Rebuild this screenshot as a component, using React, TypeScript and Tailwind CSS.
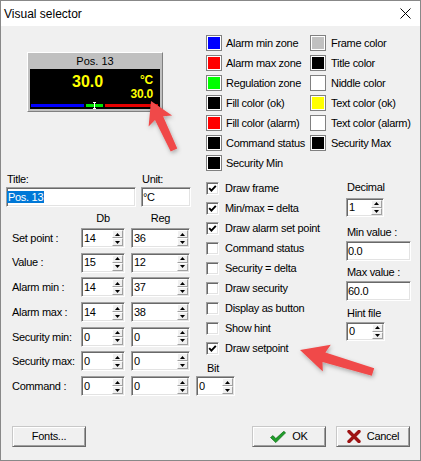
import React from 'react';

const sunken =
  'bg-white border border-t-[#a0a0a0] border-l-[#a0a0a0] border-r-white border-b-white shadow-[inset_1px_1px_0_#696969,inset_-1px_-1px_0_#e3e3e3] p-[1px]';
const raised =
  'bg-[#f0f0f0] border border-t-[#c8c8c8] border-l-[#c8c8c8] border-r-[#696969] border-b-[#696969] shadow-[inset_1px_1px_0_#fff,inset_-1px_-1px_0_#a0a0a0]';

const TriUp = () => (
  <svg width="5" height="3" viewBox="0 0 5 3">
    <path d="M0 3 L2.5 0 L5 3Z" fill="#000" />
  </svg>
);
const TriDown = () => (
  <svg width="5" height="3" viewBox="0 0 5 3">
    <path d="M0 0 L2.5 3 L5 0Z" fill="#000" />
  </svg>
);

function Spin() {
  return (
    <div className="ml-auto w-[11px] h-full flex flex-col shrink-0">
      <div className="flex-1 flex items-center justify-center bg-[#f0f0f0] border border-t-white border-l-white border-r-[#a0a0a0] border-b-[#a0a0a0]">
        <TriUp />
      </div>
      <div className="flex-1 flex items-center justify-center bg-[#f0f0f0] border border-t-white border-l-white border-r-[#a0a0a0] border-b-[#a0a0a0]">
        <TriDown />
      </div>
    </div>
  );
}

function SpinEdit({ value, w, h = 'h-[20px]' }: { value: string; w: string; h?: string }) {
  return (
    <div className={`${sunken} ${w} ${h} flex items-stretch shrink-0`}>
      <span className="flex items-center pl-[1px]">{value}</span>
      <Spin />
    </div>
  );
}

function Swatch({ color }: { color: string }) {
  return (
    <div className="w-[16px] h-[16px] border border-[#808080] p-[1px] bg-white shrink-0">
      <div className={`w-full h-full ${color}`} />
    </div>
  );
}

function CheckRow({ label, checked }: { label: string; checked?: boolean }) {
  return (
    <div className="h-[20px] flex items-center">
      <div className="w-[13px] h-[13px] bg-white border border-t-[#a0a0a0] border-l-[#a0a0a0] border-r-white border-b-white shadow-[inset_1px_1px_0_#696969,inset_-1px_-1px_0_#e3e3e3] flex items-center justify-center shrink-0">
        {checked && (
          <svg width="9" height="9" viewBox="0 0 9 9">
            <path d="M1.2 4.2 L3.4 6.6 L7.8 1.8" stroke="#000" strokeWidth="1.9" fill="none" />
          </svg>
        )}
      </div>
      <span className="ml-[6px]">{label}</span>
    </div>
  );
}

function Preview() {
  return (
    <div className="w-[136px] h-[60px] bg-[#c0c0c0] border border-t-white border-l-white border-r-[#808080] border-b-[#808080] flex flex-col">
      <div className="h-[16px] flex items-center justify-center tracking-normal">Pos. 13</div>
      <div className="mx-[2px] h-[40px] bg-black flex flex-col">
        <div className="h-[35px] flex text-[#ffff00] font-bold">
          <span className="ml-[42px] mt-[5px] text-[16px] leading-[16px] tracking-normal">30.0</span>
          <div className="ml-auto mr-[7px] mt-[5px] flex flex-col items-end gap-[1.5px] text-[12px] leading-[12px] tracking-[-0.2px]">
            <span>°C</span>
            <span>30.0</span>
          </div>
        </div>
        <div className="relative ml-[1px] w-[127px] h-[3px] flex gap-[2px]">
          <div className="w-[53px] bg-[#0000ff]" />
          <div className="w-[17px] bg-[#00e600]" />
          <div className="flex-1 bg-[#e60000]" />
          <div className="absolute left-[62px] top-[-2px] w-[3px] h-[7px] flex flex-col items-center">
            <div className="w-[3px] h-[1px] bg-white" />
            <div className="w-[1px] flex-1 bg-white" />
            <div className="w-[3px] h-[1px] bg-white" />
          </div>
        </div>
      </div>
    </div>
  );
}

const colors: [string, string][] = [
  ['bg-[#0000ff]', 'Alarm min zone'],
  ['bg-[#c0c0c0]', 'Frame color'],
  ['bg-[#ff0000]', 'Alarm max zone'],
  ['bg-black', 'Title color'],
  ['bg-[#00ff00]', 'Regulation zone'],
  ['bg-white', 'Niddle color'],
  ['bg-black', 'Fill color (ok)'],
  ['bg-[#ffff00]', 'Text color (ok)'],
  ['bg-[#ff0000]', 'Fill color (alarm)'],
  ['bg-white', 'Text color (alarm)'],
  ['bg-black', 'Command status'],
  ['bg-black', 'Security Max'],
  ['bg-black', 'Security Min'],
];

const rows = [
  ['Set point :', '14', '36'],
  ['Value :', '15', '12'],
  ['Alarm min :', '14', '37'],
  ['Alarm max :', '14', '38'],
  ['Security min:', '0', '0'],
  ['Security max:', '0', '0'],
];

const checks: [string, boolean][] = [
  ['Draw frame', true],
  ['Min/max = delta', true],
  ['Draw alarm set point', true],
  ['Command status', false],
  ['Security = delta', false],
  ['Draw security', false],
  ['Display as button', false],
  ['Show hint', false],
  ['Draw setpoint', true],
];

function arrowPoints(tx: number, ty: number, sx: number, sy: number, headLen: number, headHalf: number, shaft: number) {
  const dx = tx - sx;
  const dy = ty - sy;
  const len = Math.hypot(dx, dy);
  const ux = dx / len;
  const uy = dy / len;
  const nx = -uy;
  const ny = ux;
  const bx = tx - ux * headLen;
  const by = ty - uy * headLen;
  const jx = bx + ux * 3;
  const jy = by + uy * 3;
  const pts = [
    [tx, ty],
    [bx + nx * headHalf, by + ny * headHalf],
    [jx + nx * shaft, jy + ny * shaft],
    [sx + nx * shaft * 0.8, sy + ny * shaft * 0.8],
    [sx - nx * shaft * 0.8, sy - ny * shaft * 0.8],
    [jx - nx * shaft, jy - ny * shaft],
    [bx - nx * headHalf, by - ny * headHalf],
  ];
  return pts.map((p) => p.map((v) => v.toFixed(1)).join(',')).join(' ');
}

function OkIcon() {
  return (
    <svg width="16" height="12" viewBox="0 0 16 12">
      <path d="M0.5 6.5 L3 4.6 L5.8 7.6 L13.8 0.3 L15.6 1.8 L5.8 11.6Z" fill="#1f9e2a" stroke="#0e6a16" strokeWidth="0.7" />
    </svg>
  );
}

function CancelIcon() {
  return (
    <svg width="14" height="13" viewBox="0 0 14 13">
      <path d="M2 1.5 L12 11.5 M12 1.5 L2 11.5" stroke="#9e1414" strokeWidth="3.4" strokeLinecap="round" />
    </svg>
  );
}

export default function App() {
  return (
    <div className="relative w-[421px] h-[461px] border border-[#888888] bg-[#f0f0f0] text-black text-[11px] tracking-[-0.3px] font-['Liberation_Sans',Arial,sans-serif] overflow-hidden select-none">
      {/* title bar */}
      <div className="h-[25px] bg-white flex items-center justify-between pl-[3px] pr-[9px]">
        <span className="text-[12px] tracking-normal">Visual selector</span>
        <svg width="11" height="11" viewBox="0 0 11 11">
          <path d="M0.5 0.5 L10.5 10.5 M10.5 0.5 L0.5 10.5" stroke="#000" strokeWidth="1" />
        </svg>
      </div>

      <div className="flex flex-col">
        {/* preview + colours */}
        <div className="flex pt-[9px]">
          <div className="ml-[26px] mt-[17px]">
            <Preview />
          </div>
          <div className="ml-[43px] grid grid-cols-[104px_auto] gap-y-[4px]">
            {colors.map(([c, label], i) => (
              <div key={i} className="h-[16px] flex items-center gap-[4px]">
                <Swatch color={c} />
                <span className={i % 2 ? 'ml-[1px]' : ''}>{label}</span>
              </div>
            ))}
          </div>
        </div>

        {/* middle */}
        <div className="flex mt-[2px]">
          <div className="ml-[5px] w-[185px] flex flex-col">
            <div className="flex gap-[5px]">
              <div className="flex flex-col">
                <span className="h-[12px] leading-[12px] pl-[1px]">Title:</span>
                <div className={`${sunken} mt-[2px] w-[130px] h-[20px] flex items-center`}>
                  <span className="bg-[#0078d7] text-white leading-[12px] h-[12px] px-[1px] ml-[-1px]">Pos. 13</span>
                </div>
              </div>
              <div className="flex flex-col">
                <span className="h-[12px] leading-[12px] pl-[1px]">Unit:</span>
                <div className={`${sunken} mt-[2px] w-[50px] h-[20px] flex items-center pl-[1px]`}>°C</div>
              </div>
            </div>
            <div className="flex mt-[5px] h-[12px] leading-[12px]">
              <span className="w-[75px]" />
              <span className="w-[44px] text-center">Db</span>
              <span className="ml-[6px] w-[59px] text-center">Reg</span>
            </div>
            <div className="flex flex-col gap-[4.7px] mt-[4px]">
              {rows.map(([label, db, reg]) => (
                <div key={label} className="h-[20px] flex items-center">
                  <span className="w-[75px] pl-[6px]">{label}</span>
                  <SpinEdit value={db} w="w-[44px]" />
                  <div className="ml-[6px]">
                    <SpinEdit value={reg} w="w-[59px]" />
                  </div>
                </div>
              ))}
            </div>
          </div>

          <div className="ml-[15px] w-[140px] flex flex-col pt-[5px]">
            {checks.map(([label, on]) => (
              <CheckRow key={label} label={label} checked={on} />
            ))}
            <span className="mt-[4px] h-[12px] leading-[12px] pl-[1px]">Bit</span>
          </div>

          <div className="flex flex-col pt-[8px]">
            <span className="h-[12px] leading-[12px] pl-[1px]">Decimal</span>
            <div className="mt-[5px]">
              <SpinEdit value="1" w="w-[38px]" h="h-[19px]" />
            </div>
            <span className="mt-[9px] h-[12px] leading-[12px] pl-[1px]">Min value :</span>
            <div className={`${sunken} mt-[3px] w-[65px] h-[20px] flex items-center`}>0.0</div>
            <span className="mt-[5px] h-[12px] leading-[12px] pl-[1px]">Max value :</span>
            <div className={`${sunken} mt-[3px] w-[65px] h-[20px] flex items-center`}>60.0</div>
            <span className="mt-[6px] h-[12px] leading-[12px] pl-[1px]">Hint file</span>
            <div className="mt-[3px]">
              <SpinEdit value="0" w="w-[39px]" h="h-[19px]" />
            </div>
          </div>
        </div>

        {/* command row */}
        <div className="h-[20px] flex items-center mt-[2px] ml-[5px]">
          <span className="w-[75px] pl-[6px]">Command :</span>
          <SpinEdit value="0" w="w-[44px]" />
          <div className="ml-[6px]">
            <SpinEdit value="0" w="w-[59px]" />
          </div>
          <div className="ml-[6px]">
            <SpinEdit value="0" w="w-[39px]" />
          </div>
        </div>

        {/* buttons */}
        <div className="flex mt-[30px] h-[21px] pl-[11px] pr-[10px]">
          <div className={`${raised} w-[74px] flex items-center justify-center`}>Fonts...</div>
          <div className="ml-auto flex gap-[10px]">
            <div className={`${raised} w-[74px] flex items-center justify-center gap-[6px]`}>
              <OkIcon />
              <span>OK</span>
            </div>
            <div className={`${raised} w-[74px] flex items-center justify-center gap-[6px]`}>
              <CancelIcon />
              <span>Cancel</span>
            </div>
          </div>
        </div>
      </div>

      {/* annotation arrows */}
      <svg className="absolute left-[-1px] top-[-1px] pointer-events-none" width="421" height="461" viewBox="0 0 421 461">
        <defs>
          <filter id="sh" x="-20%" y="-20%" width="140%" height="140%">
            <feDropShadow dx="1" dy="2" stdDeviation="2" floodColor="#000" floodOpacity="0.3" />
          </filter>
        </defs>
        <polygon points={arrowPoints(151, 101, 174, 150, 22, 13, 4.5)} fill="#f04a4a" filter="url(#sh)" />
        <polygon points={arrowPoints(300, 350, 373, 372, 28, 14, 5)} fill="#f04a4a" filter="url(#sh)" />
      </svg>
    </div>
  );
}
